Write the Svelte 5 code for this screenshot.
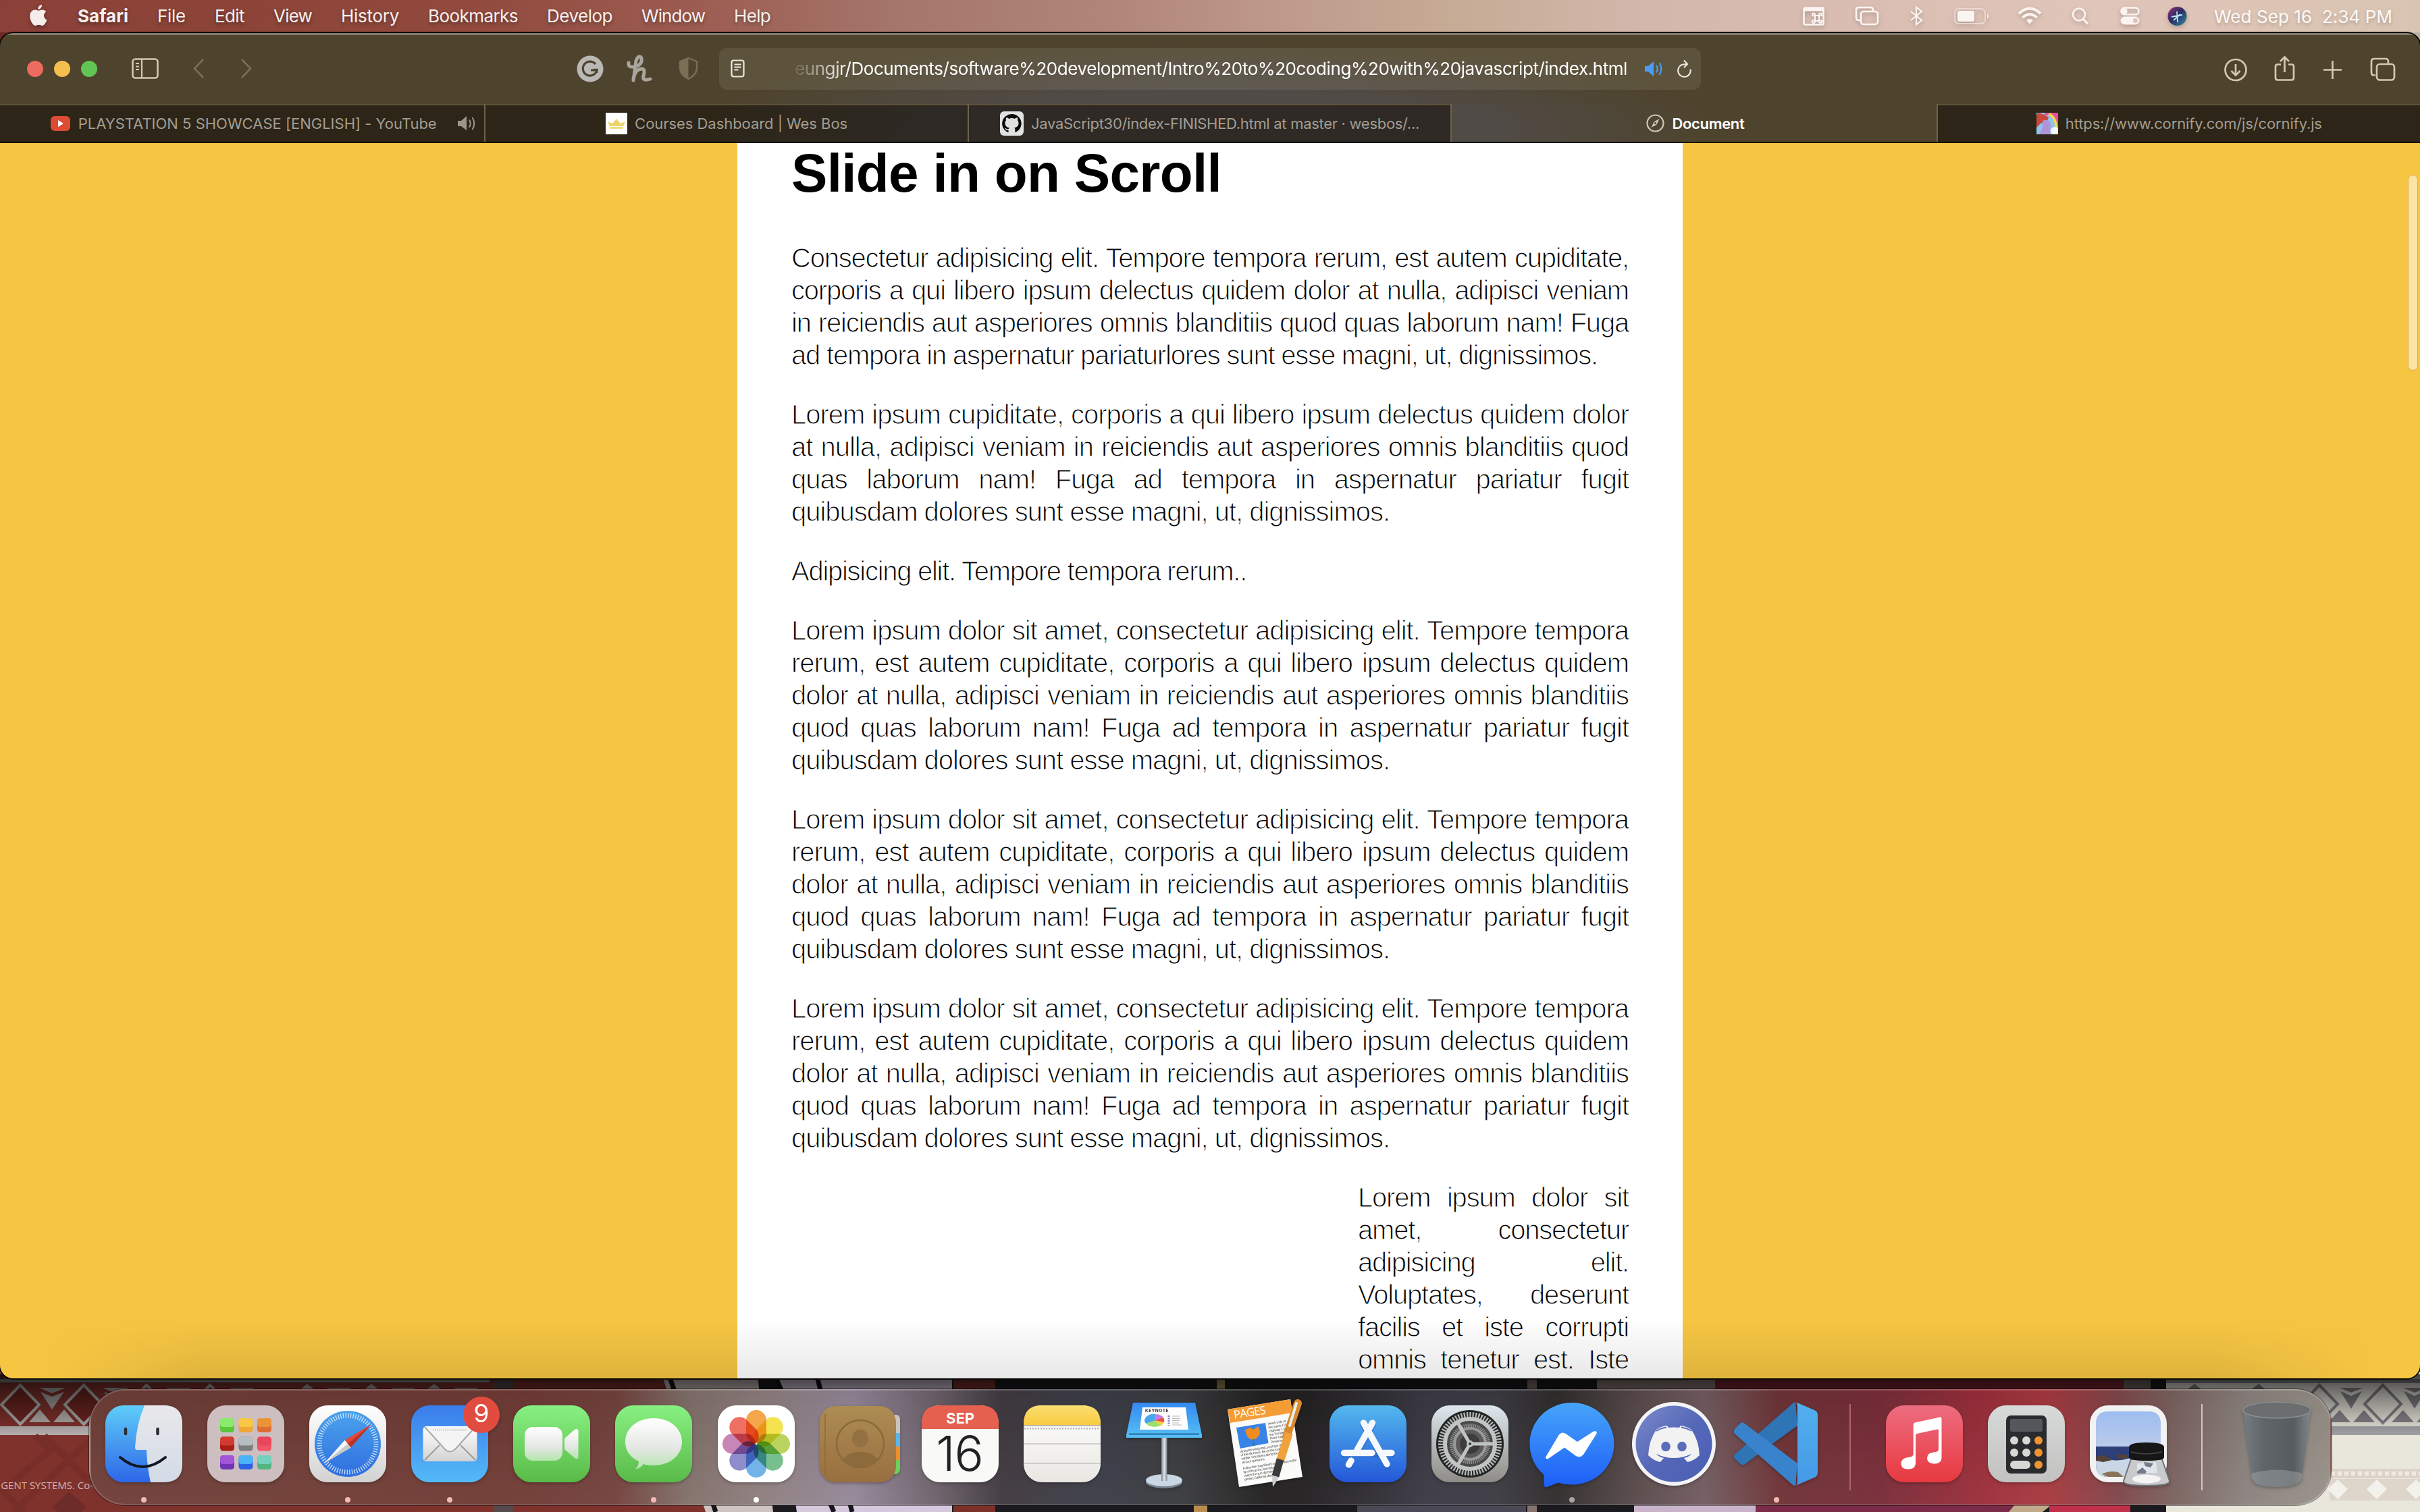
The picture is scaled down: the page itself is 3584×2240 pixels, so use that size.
<script>
  // Spreads the difference between natural and wanted width over the letters.
  function fit(node, width) {
    node.style.letterSpacing = '0px';
    const natural = node.getBoundingClientRect().width;
    const count = [...node.textContent].length;
    node.style.letterSpacing = `${(width - natural) / count}px`;
  }

  // Sizes a whole paragraph by its last, unjustified line.
  function fitParagraph(node, width) {
    const last = node.querySelector('.last .t');
    node.style.letterSpacing = '0px';
    const natural = last.getBoundingClientRect().width;
    node.style.letterSpacing = `${(width - natural) / [...last.textContent].length}px`;
  }

  const menus = [
    ['Safari', 75], ['File', 42], ['Edit', 44], ['View', 57], ['History', 86],
    ['Bookmarks', 133], ['Develop', 97], ['Window', 94], ['Help', 54]
  ];

  const lorem = {
    lines: [
      'Lorem ipsum dolor sit amet, consectetur adipisicing elit. Tempore tempora',
      'rerum, est autem cupiditate, corporis a qui libero ipsum delectus quidem',
      'dolor at nulla, adipisci veniam in reiciendis aut asperiores omnis blanditiis',
      'quod quas laborum nam! Fuga ad tempora in aspernatur pariatur fugit'
    ],
    last: 'quibusdam dolores sunt esse magni, ut, dignissimos.',
    width: 886
  };

  const paragraphs = [
    {
      lines: [
        'Consectetur adipisicing elit. Tempore tempora rerum, est autem cupiditate,',
        'corporis a qui libero ipsum delectus quidem dolor at nulla, adipisci veniam',
        'in reiciendis aut asperiores omnis blanditiis quod quas laborum nam! Fuga'
      ],
      last: 'ad tempora in aspernatur pariaturlores sunt esse magni, ut, dignissimos.',
      width: 1194
    },
    {
      lines: [
        'Lorem ipsum cupiditate, corporis a qui libero ipsum delectus quidem dolor',
        'at nulla, adipisci veniam in reiciendis aut asperiores omnis blanditiis quod',
        'quas laborum nam! Fuga ad tempora in aspernatur pariatur fugit'
      ],
      last: 'quibusdam dolores sunt esse magni, ut, dignissimos.',
      width: 886
    },
    { lines: [], last: 'Adipisicing elit. Tempore tempora rerum..', width: 674 },
    lorem,
    lorem,
    lorem
  ];

  const aside = [
    'Lorem ipsum dolor sit',
    'amet, consectetur',
    'adipisicing elit.',
    'Voluptates, deserunt',
    'facilis et iste corrupti',
    'omnis tenetur est. Iste'
  ];

  const launchpad = [
    ['#9cf57c', '#57c83a'], ['#fbd24e', '#efa733'], ['#efa13a', '#dd6d33'],
    ['#e2463a', '#a81d14'], ['#c9d3d8', '#7b7b7b'], ['#ea3f5b', '#ee5666'],
    ['#b362e6', '#7233b4'], ['#55cdfb', '#2b62e6'], ['#7fdcd0', '#52b57f']
  ];

  const petals = ['#f49d38', '#f3e03c', '#b4d04e', '#69b882', '#62abe8', '#8280c6', '#c279b0', '#ee5f52'];
  const left = [-15, 79, 172, 266];
  const right = [3435, 3529, 3623];
</script>

<div class="screen">
  <svg class="wallpaper" width="3584" height="2240" viewBox="0 0 3584 2240">
    <defs>
      <linearGradient id="shade" x1="0" x2="0" y1="0" y2="1">
        <stop offset="0" stop-color="#000" stop-opacity=".72" /><stop offset=".35" stop-color="#000" stop-opacity=".45" /><stop offset="1" stop-color="#000" stop-opacity="0" />
      </linearGradient>
      <linearGradient id="pc1" x1="0" x2="0" y1="0" y2="1"><stop offset="0" stop-color="#5fcdf9" /><stop offset="1" stop-color="#2d66e8" /></linearGradient>
      <linearGradient id="pc2" x1="0" x2="0" y1="0" y2="1"><stop offset="0" stop-color="#e9e9eb" /><stop offset="1" stop-color="#d2dae6" /></linearGradient>
      <linearGradient id="whitish" x1="0" x2="0" y1="0" y2="1"><stop offset="0" stop-color="#fff" /><stop offset="1" stop-color="#d2d2d2" /></linearGradient>
      <linearGradient id="compass" x1="0" x2="0" y1="0" y2="1"><stop offset="0" stop-color="#4ba3ec" /><stop offset="1" stop-color="#2f6ee0" /></linearGradient>
      <linearGradient id="mail" x1="0" x2="0" y1="0" y2="1"><stop offset="0" stop-color="#3b7ceb" /><stop offset="1" stop-color="#54baf8" /></linearGradient>
      <linearGradient id="green" x1="0" x2="0" y1="0" y2="1"><stop offset="0" stop-color="#88f082" /><stop offset="1" stop-color="#59ba48" /></linearGradient>
      <linearGradient id="glass" x1="0" x2="0" y1="0" y2="1"><stop offset="0" stop-color="#fff" /><stop offset=".6" stop-color="#e3e7e3" /><stop offset="1" stop-color="#b5e5ad" /></linearGradient>
      <linearGradient id="leather" x1="0" x2="0" y1="0" y2="1"><stop offset="0" stop-color="#ad8c53" /><stop offset="1" stop-color="#996f3f" /></linearGradient>
      <linearGradient id="yellow" x1="0" x2="0" y1="0" y2="1"><stop offset="0" stop-color="#fbdf72" /><stop offset="1" stop-color="#f8ca40" /></linearGradient>
      <linearGradient id="paper" x1="0" x2="0" y1="0" y2="1"><stop offset="0" stop-color="#fff" /><stop offset="1" stop-color="#e9e7e2" /></linearGradient>
      <linearGradient id="board" x1="0" x2="0" y1="0" y2="1"><stop offset="0" stop-color="#3489f0" /><stop offset="1" stop-color="#58c0f5" /></linearGradient>
      <linearGradient id="metal" x1="0" x2="1" y1="0" y2="0"><stop offset="0" stop-color="#7f858e" /><stop offset=".5" stop-color="#dfe5ec" /><stop offset="1" stop-color="#81878f" /></linearGradient>
      <linearGradient id="store" x1="0" x2="0" y1="0" y2="1"><stop offset="0" stop-color="#54b8ef" /><stop offset="1" stop-color="#2357d8" /></linearGradient>
      <linearGradient id="prefs" x1="0" x2="0" y1="0" y2="1"><stop offset="0" stop-color="#dde7ed" /><stop offset="1" stop-color="#8f8c87" /></linearGradient>
      <linearGradient id="messenger" x1="0" x2="0" y1="0" y2="1"><stop offset="0" stop-color="#46a5f9" /><stop offset="1" stop-color="#1d5ef8" /></linearGradient>
      <linearGradient id="discord" x1="0" x2="1" y1="0" y2="1"><stop offset="0" stop-color="#7b8bcb" /><stop offset=".5" stop-color="#5567b8" /><stop offset="1" stop-color="#4a5fb4" /></linearGradient>
      <linearGradient id="code" x1="0" x2="0" y1="0" y2="1"><stop offset="0" stop-color="#52b0ee" /><stop offset="1" stop-color="#4598e6" /></linearGradient>
      <linearGradient id="music" x1="0" x2="0" y1="0" y2="1"><stop offset="0" stop-color="#ed6c80" /><stop offset="1" stop-color="#e7393f" /></linearGradient>
      <linearGradient id="calc" x1="0" x2="0" y1="0" y2="1"><stop offset="0" stop-color="#d7dad9" /><stop offset="1" stop-color="#c2c2c0" /></linearGradient>
      <linearGradient id="sky" x1="0" x2="0" y1="0" y2="1"><stop offset="0" stop-color="#9dbdf0" /><stop offset="1" stop-color="#bccbea" /></linearGradient>
      <linearGradient id="bin" x1="0" x2="1" y1="0" y2="0"><stop offset="0" stop-color="#777e83" /><stop offset=".3" stop-color="#5f6569" /><stop offset=".75" stop-color="#575c60" /><stop offset="1" stop-color="#80878b" /></linearGradient>
      <linearGradient id="siri" x1="0" x2="1" y1="0" y2="1"><stop offset="0" stop-color="#a2347c" /><stop offset=".45" stop-color="#2b2a63" /><stop offset="1" stop-color="#2f8f9e" /></linearGradient>
    </defs>
    <rect width="1750" height="60" y="40" fill="#6d2722" />
    <rect width="1834" height="60" x="1750" y="40" fill="#b9b3a6" />
    <rect y="2020" width="3584" height="220" fill="#1b1a1e" />
    <rect y="2020" width="1050" height="220" fill="#7f312b" />
    <rect y="2020" x="730" width="30" height="220" fill="#55494b" />
    <path d="M975 2020H1120L1145 2240H1045Z" fill="#cfc3bf" />
    <path d="M1150 2020H1410V2240H1180Z" fill="#d5c8dc" />
    <path d="M985 2020L1060 2240M1140 2020L1235 2240M1205 2020L1262 2240" stroke="#17141a" stroke-width="7" />
    <rect x="1412" y="2020" width="62" height="220" fill="#7c302a" />
    <rect x="1802" y="2020" width="12" height="40" fill="#a8925a" />
    <rect x="1768" y="2228" width="20" height="12" fill="#b98d4e" />
    <rect x="2010" y="2228" width="250" height="12" fill="#4b4856" />
    <rect x="2262" y="2020" width="14" height="220" fill="#84726e" />
    <rect x="2365" y="2020" width="190" height="60" fill="#8d7b76" />
    <rect x="2420" y="2228" width="190" height="12" fill="#c9b3cb" />
    <rect x="2540" y="2020" width="610" height="60" fill="#7b2530" />
    <rect x="2600" y="2228" width="400" height="12" fill="#7b2b48" />
    <path d="M2985 2228H3040L3025 2240H2975Z" fill="#c2a98a" />
    <rect x="3035" y="2228" width="120" height="12" fill="#c1304a" />
    <rect x="3145" y="2020" width="40" height="60" fill="#6f6660" />
    <rect x="3208" y="2020" width="376" height="220" fill="#e9e6dc" />
    <g>
      <rect y="2043" width="725" height="5" fill="#8a9292" />
      {#each left as x}
        <path d={`M${x + 45} 2052L${x + 73} 2081L${x + 45} 2110L${x + 17} 2081Z`} fill="#6d2520" stroke="#a9aaa7" stroke-width="4" />
        <path d={`M${x + 73} 2056H${x + 112}L${x + 92} 2064Z M${x + 75} 2062L${x + 92} 2069L${x + 110} 2062L${x + 92} 2088Z`} fill="#a3a09f" />
        <path d={`M${x + 58} 2107L${x + 74} 2088L${x + 90} 2107Z M${x + 94} 2107L${x + 110} 2088L${x + 126} 2107Z`} fill="#b0aaa7" />
      {/each}
      {#each [455, 550, 643] as x}
        <path d={`M${x - 10} 2058L${x} 2050L${x + 10} 2058Z M${x + 28} 2056H${x + 66}L${x + 47} 2064Z`} fill="#a3a09f" />
      {/each}
      <rect y="2113" width="134" height="13" fill="#b3aeac" />
      <path d="M52 2127L74 2149L10 2202M66 2127L160 2222M140 2127L20 2240M-5 2200L35 2240" fill="none" stroke="#772e29" stroke-width="9" />
      <path d="M102 2210L128 2232L102 2256L78 2232Z" fill="#6d2c29" />
      <text x="-3" y="2206" class="credit">IGENT SYSTEMS. Co-d</text>
    </g>
    <g>
      <rect x="3208" y="2043" width="376" height="6" fill="#8f9196" />
      {#each right as x}
        <path d={`M${x} 2052L${x + 27} 2080L${x} 2108L${x - 27} 2080Z`} fill="none" stroke="#85858a" stroke-width="4" />
        <path d={`M${x + 30} 2056H${x + 65}L${x + 47} 2063Z M${x + 31} 2061L${x + 47} 2068L${x + 63} 2061L${x + 47} 2087Z M${x + 13} 2107L${x + 30} 2089L${x + 46} 2107Z M${x + 50} 2107L${x + 66} 2089L${x + 82} 2107Z`} fill="#85858a" />
      {/each}
      {#each [3250, 3345] as x}
        <path d={`M${x - 10} 2058L${x} 2050L${x + 10} 2058Z`} fill="#85858a" />
      {/each}
      <rect x="3450" y="2113" width="134" height="13" fill="#a09fa3" />
      <rect x="3450" y="2176" width="134" height="14" fill="#dcd3c8" />
      <path d="M3452 2183H3584" stroke="#efebe2" stroke-width="6" stroke-dasharray="6 4" />
      <rect x="3450" y="2191" width="134" height="32" fill="#ded6ca" />
      {#each [3462, 3520, 3578] as x}
        <path d={`M${x} 2192L${x + 15} 2206L${x} 2221L${x - 15} 2206Z`} fill="#f3f1eb" />
      {/each}
    </g>
    <rect y="2036" width="3584" height="90" fill="url(#shade)" />
  </svg>

  <header class="menubar">
    <svg class="apple" width="26" height="31" viewBox="0 0 26 31" fill="#f5edec">
      <path d="M18 0c.3 2-.6 3.800-1.700 5.100-1.100 1.300-2.600 2-4.100 1.900-.2-1.900.7-3.700 1.700-4.900C15 .9 16.700.1 18 0zM25.500 22.800c-.7 1.700-1.100 2.400-2 3.900-1.200 2-3 4.300-5.100 4.300-1.900 0-2.400-1.200-5-1.200s-3.100 1.200-5 1.200c-2.200 0-3.800-2.100-5-4.100C-.1 21.300-.5 14.700 1.600 11.300c1.500-2.400 3.800-3.800 6-3.800 2.300 0 3.700 1.200 5.600 1.200 1.800 0 2.900-1.200 5.500-1.200 2 0 4.100 1.100 5.600 3-4.900 2.700-4.100 9.700 1.200 12.300z" />
    </svg>
    <nav>
      {#each menus as [label, width], i}
        <span class="slot" style:width="{width}px"><span class="t" class:strong={i === 0} use:fit={width}>{label}</span></span>
      {/each}
    </nav>
    <svg class="status" width="570" height="32" viewBox="2670 8 570 32" fill="none" stroke="#fbf5f2" stroke-width="2.600">
      <rect x="2671.500" y="11.500" width="29" height="25" rx="2" />
      <path d="M2672 14H2700" stroke-width="5" />
      <g stroke-width="2"><rect x="2688" y="23" width="6" height="8" /><circle cx="2686" cy="21.500" r="2" /><circle cx="2696" cy="21.500" r="2" /><circle cx="2686" cy="32" r="2" /><circle cx="2696" cy="32" r="2" /></g>
      <path d="M2755 30h-2q-4 0-4-4V15q0-4 4-4h17q4 0 4 4v1" /><rect x="2756" y="17" width="25" height="19" rx="4" />
      <path d="M2830 17L2846 30L2838 36.500V10.500L2846 17L2830 30" stroke-width="2.200" />
      <rect x="2895" y="13" width="45" height="22" rx="6" stroke="#f4e6e0" stroke-width="2" opacity=".7" />
      <rect x="2899" y="16" width="25" height="16" rx="3" fill="#fbf5f2" stroke="none" />
      <path d="M2943 20v8q5-4 0-8z" fill="#f4e6e0" stroke="none" />
      <path d="M2990 20Q3006 5 3022 20M2995.500 26Q3006 16.500 3016.500 26" stroke-width="4" />
      <path d="M3001 30Q3006 26 3011 30L3006 35.500Z" fill="#fbf5f2" stroke="none" />
      <circle cx="3079" cy="21.500" r="9" /><path d="M3085.500 28.500L3092 35.500" stroke-width="3" />
      <rect x="3141.500" y="11.500" width="26" height="10" rx="5" /><circle cx="3146.500" cy="16.500" r="3" fill="#fbf5f2" />
      <rect x="3141" y="25" width="27" height="11" rx="5.500" fill="#fbf5f2" stroke-width="1" /><circle cx="3162.500" cy="30.500" r="3.500" fill="#dfc3b7" stroke="none" />
      <circle cx="3224.500" cy="24" r="14" fill="url(#siri)" stroke="none" />
      <path d="M3216 25L3232 22M3224 17L3225 33M3219 30L3229 21" stroke="#bfe9f5" stroke-width="1.800" />
    </svg>
    <span class="clock"><span class="t" use:fit={264}>Wed Sep 16&nbsp; 2:34 PM</span></span>
  </header>

  <main class="window">
    <section class="toolbar">
      <div class="lights"><i></i><i></i><i></i></div>
      <svg class="navs" width="180" height="40" viewBox="195 82 180 40" fill="none" stroke="#d3c8ae" stroke-width="2.600">
        <rect x="196.500" y="87.500" width="37" height="28" rx="4" /><path d="M210 88V115M201 94h5M201 98.500h5M201 103h5" stroke-width="2.200" />
        <path d="M301 88L288 101.500L301 115M358 88L371 101.500L358 115" stroke="#7a6e54" />
      </svg>
      <svg class="ext" width="182" height="44" viewBox="853 80 182 44">
        <circle cx="874" cy="102" r="19.500" fill="#b9b8b5" />
        <path d="M882 95a10.500 10.500 0 1 0 2 9H875" fill="none" stroke="#4e432c" stroke-width="3.200" />
        <path d="M884 108v-5h-5" fill="none" stroke="#4e432c" stroke-width="2.500" />
        <path d="M931 93Q930 100 938 99Q952 97 950 86Q946 80 942 90L938 119M938 116Q942 101 951 102Q956 103 953 112Q951 121 963 117" fill="none" stroke="#a9a59d" stroke-width="5" stroke-linecap="round" stroke-linejoin="round" />
        <path d="M1019.500 86L1032 91V102Q1031 111 1019.500 117Q1008 111 1007 102V91Z" fill="none" stroke="#7a6e54" stroke-width="2.400" />
        <path d="M1019.500 86V117Q1008 111 1007 102V91Z" fill="#7a6e54" />
      </svg>
      <div class="address">
        <svg width="22" height="28" viewBox="0 0 22 28" fill="none" stroke="#ece8df" stroke-width="2.200"><rect x="1.500" y="1.500" width="18" height="24" rx="3" /><path d="M5.500 7.500h10M5.500 11.500h10M5.500 15.500h6" stroke-width="1.800" /></svg>
        <span class="url"><span class="t" use:fit={1233}>eungjr/Documents/software%20development/Intro%20to%20coding%20with%20javascript/index.html</span></span>
        <svg class="vol" width="28" height="24" viewBox="0 0 28 24"><path d="M0 8H5L13 1V23L5 16H0Z" fill="#4a9df5" /><path d="M17 6.500Q20.500 12 17 17.500M21.500 3Q27 12 21.500 21" fill="none" stroke="#4a9df5" stroke-width="2.200" /></svg>
        <svg width="22" height="28" viewBox="0 0 22 28" fill="none" stroke="#ece8df" stroke-width="2.100"><path d="M19.500 14.500A9.300 9.300 0 1 1 10.500 7.200H14.500" /><path d="M10 1.500L15 7L10 12" /></svg>
      </div>
      <svg class="actions" width="256" height="42" viewBox="3293 79 256 42" fill="none" stroke="#d3c8ae" stroke-width="2.700">
        <circle cx="3311" cy="101.500" r="15.500" /><path d="M3311 93V109M3304.500 103L3311 109.500L3317.500 103" />
        <path d="M3378 93.500H3373Q3370 93.500 3370 96.500V113Q3370 116.500 3373 116.500H3394Q3397 116.500 3397 113V96.500Q3397 93.500 3394 93.500H3389M3383.500 105V83M3377 89L3383.500 82.500L3390 89" />
        <path d="M3454.500 88V115M3441 101.500H3468" />
        <path d="M3518 109.500H3516Q3512 109.500 3512 105V89.500Q3512 85 3516 85H3533Q3537 85 3537 89.500V92" /><rect x="3520" y="93" width="26" height="23.500" rx="4.500" />
      </svg>
    </section>

    <section class="tabs">
      <div class="tab nudged">
        <svg class="fav" width="30" height="24" viewBox="0 0 30 24"><rect y="1" width="29" height="22" rx="6" fill="#dc4b34" /><path d="M11 7L19 12L11 17Z" fill="#fff" /></svg>
        <span class="t" use:fit={531}>PLAYSTATION 5 SHOWCASE [ENGLISH] - YouTube</span>
        <svg class="sound" width="30" height="24" viewBox="0 0 30 24"><path d="M0 8H5L13 1V22L5 16H0Z" fill="#9b968c" /><path d="M17 6.500Q20.500 12 17 17.500M21.500 3Q27 12 21.500 21" fill="none" stroke="#9b968c" stroke-width="2" /></svg>
      </div>
      <div class="tab">
        <svg class="fav" width="32" height="32" viewBox="0 0 32 32"><rect width="32" height="32" fill="#fff" /><path d="M6 20L3 13L10 16L16 9L22 16L29 13L26 20Z" fill="#ecd469" /><path d="M6 22.500H26" stroke="#ecd469" stroke-width="2.500" /></svg>
        <span class="t" use:fit={315}>Courses Dashboard | Wes Bos</span>
      </div>
      <div class="tab">
        <svg class="fav" width="35" height="36" viewBox="0 0 35 36"><rect width="35" height="36" rx="6" fill="#e2e2e1" /><path d="M17.500 4a14 14 0 0 0-5 27.200V28c-4 .7-4-2.500-6-3 2-.7 3 1.600 4.500 1.600l1.800-.5c.3-1 .8-1.500 1.200-1.900-4.500-.7-6.500-3-6.500-7 0-2 .7-3.200 1.500-4-.4-1.200-.2-2.800.2-3.900 1.800 0 3 1 3.900 1.600a13 13 0 0 1 8.800 0c.9-.6 2.100-1.600 3.900-1.600.4 1.100.6 2.700.2 3.900.8.800 1.500 2 1.500 4 0 4-2 6.300-6.500 7 .8.700 1.300 1.600 1.300 3v4A14 14 0 0 0 17.500 4z" fill="#0b0b0b" /></svg>
        <span class="t" use:fit={575}>JavaScript30/index-FINISHED.html at master · wesbos/...</span>
      </div>
      <div class="tab active nudged">
        <svg class="fav" width="27" height="27" viewBox="0 0 27 27" fill="none" stroke="#d0c8ba" stroke-width="2.200"><circle cx="13.500" cy="13.500" r="12" /><path d="M19.500 7L15.500 15.500L7.500 20L11.500 11.500Z" fill="#d0c8ba" stroke="none" /><circle cx="13.500" cy="13.500" r="1.500" fill="#4e432c" stroke="none" /></svg>
        <span class="t" use:fit={107}>Document</span>
      </div>
      <div class="tab nudged">
        <svg class="fav" width="32" height="32" viewBox="0 0 32 32"><rect width="32" height="32" fill="#8fc4ee" /><path d="M12 0H32V22Q28 2 12 4Z" fill="#e84fa0" /><path d="M18 2Q30 6 29 26" stroke="#f6d84a" stroke-width="3.500" fill="none" /><path d="M2 0Q12 2 18 7L16 12L6 16L0 22V4Z" fill="#c8483c" /><path d="M9 12Q18 8 21 16L20 32H4Q10 24 9 12Z" fill="#b293d8" /><circle cx="27" cy="27" r="6" fill="#f4f7fc" /></svg>
        <span class="t" use:fit={380}>https://www.cornify.com/js/cornify.js</span>
      </div>
    </section>

    <section class="page">
      <article>
        <h1><span class="t" use:fit={637}>Slide in on Scroll</span></h1>
        {#each paragraphs as p}
          <p use:fitParagraph={p.width}>
            {#each p.lines as line}<span class="line">{line}</span>{/each}
            <span class="last"><span class="t">{p.last}</span></span>
          </p>
        {/each}
        <p class="aside">
          {#each aside as line}<span class="line">{line}</span>{/each}
        </p>
      </article>
      <div class="fade"></div>
      <div class="scrollbar"></div>
    </section>
  </main>

  <footer class="dock">
    <div class="app run">
      <svg viewBox="0 0 114 114"><rect width="114" height="114" rx="27" fill="url(#pc1)" /><path d="M58 0H87Q114 0 114 27V87Q114 114 87 114H67Q62 92 61 66H47Q44 66 44 62Q46 28 58 0Z" fill="url(#pc2)" /><path d="M30 35V42M77.500 35V42" stroke="#2a2d33" stroke-width="4.500" stroke-linecap="round" /><path d="M22 77Q55 105 89 77" fill="none" stroke="#121820" stroke-width="4" stroke-linecap="round" /></svg>
    </div>
    <div class="app">
      <svg viewBox="0 0 114 114"><rect width="114" height="114" rx="27" fill="#cdbfc0" />
        {#each launchpad as [a, b], i}
          <rect x={19 + (i % 3) * 27.5} y={19 + Math.floor(i / 3) * 27.5} width="21" height="21" rx="4.500" fill={b} />
          <rect x={19 + (i % 3) * 27.5} y={19 + Math.floor(i / 3) * 27.5} width="21" height="13" rx="4.500" fill={a} opacity=".75" />
        {/each}
      </svg>
    </div>
    <div class="app run">
      <svg viewBox="0 0 114 114"><rect width="114" height="114" rx="27" fill="url(#whitish)" /><circle cx="57" cy="57" r="49" fill="url(#compass)" /><circle cx="57" cy="57" r="42" fill="none" stroke="#dcebfa" stroke-width="7" stroke-dasharray="1.200 2.465" /><path d="M92 28L52.600 51.600L61.400 62.400Z" fill="#e0493c" /><path d="M92 28L57 57L61.400 62.400Z" fill="#b93328" /><path d="M22 86L52.600 51.600L61.400 62.400Z" fill="#f6f6f6" /><path d="M22 86L57 57L61.400 62.400Z" fill="#c9c9c9" /></svg>
    </div>
    <div class="app run">
      <svg viewBox="0 0 114 114"><rect width="114" height="114" rx="27" fill="url(#mail)" /><rect x="17.500" y="31" width="80" height="52" rx="5" fill="url(#whitish)" /><path d="M20 81L42 59M95 81L73 59" stroke="#9a9a9a" stroke-width="1.800" /><path d="M20 32L49 64Q57 73 66 64L95 32" fill="#f4f4f4" stroke="#a9a9a9" stroke-width="2" /><path d="M32 36.500H82" stroke="#bbb" stroke-width="1.500" stroke-dasharray="2 1" /><circle cx="104" cy="14" r="27" fill="#e24c40" /><text x="104" y="25" class="badge">9</text></svg>
    </div>
    <div class="app">
      <svg viewBox="0 0 114 114"><rect width="114" height="114" rx="27" fill="url(#green)" /><rect x="17" y="32" width="56" height="50" rx="12" fill="url(#glass)" /><path d="M76 49L91 36Q96.500 33 96.500 39V76Q96.500 81 91 78L76 65Z" fill="url(#glass)" /></svg>
    </div>
    <div class="app run">
      <svg viewBox="0 0 114 114"><rect width="114" height="114" rx="27" fill="url(#green)" /><path d="M57 19C81 19 99 34 99 54S81 89 57 89Q48 89 42 87Q38 93 30 94.500Q35 90 35 83C22 77 15 67 15 54C15 34 33 19 57 19Z" fill="url(#glass)" /></svg>
    </div>
    <div class="app run bright">
      <svg viewBox="0 0 114 114"><rect width="114" height="114" rx="27" fill="#fff" />
        {#each petals as color, i}
          <rect class="petal" x="42" y="7" width="30" height="49" rx="15" fill={color} transform={`rotate(${i * 45} 57 57)`} />
        {/each}
      </svg>
    </div>
    <div class="app">
      <svg viewBox="0 0 114 114"><path d="M100 14H113Q119 14 119 22V42H100Z" fill="#c9c5bd" /><rect x="100" y="41" width="19" height="21" fill="#5bb4ea" /><rect x="100" y="61" width="19" height="21" fill="#ec8f2f" /><path d="M100 81H119V94Q119 100 113 102H100Z" fill="#6fcf5c" /><rect y="1" width="113" height="113" rx="24" fill="url(#leather)" /><path d="M8 12V102" stroke="#8d6b3a" stroke-width="1.500" /><circle cx="60" cy="57" r="35" fill="none" stroke="#8a6a3b" stroke-width="2.500" /><ellipse cx="60" cy="49" rx="12" ry="13.500" fill="#937142" /><path d="M35 80Q42 69 60 69T85 80Q75 92 60 92T35 80Z" fill="#8d6a3c" /></svg>
    </div>
    <div class="app">
      <svg viewBox="0 0 114 114"><rect width="114" height="114" rx="27" fill="#f9f9f8" /><path d="M0 35V27Q0 0 27 0H87Q114 0 114 27V35Z" fill="#e5604f" /><text x="57" y="27" class="month">SEP</text><text x="56" y="97" class="day">16</text></svg>
    </div>
    <div class="app">
      <svg viewBox="0 0 114 114"><rect width="114" height="114" rx="27" fill="url(#paper)" /><path d="M0 29V27Q0 0 27 0H87Q114 0 114 27V29Z" fill="url(#yellow)" /><path d="M0 30H114" stroke="#a8a294" stroke-width="1.500" /><path d="M1 34.500H113" stroke="#a9a7a2" stroke-width="2" stroke-dasharray="2 2" /><path d="M0 57H114M0 86H114" stroke="#cfcdc9" stroke-width="1.800" /></svg>
    </div>
    <div class="app">
      <svg viewBox="0 0 114 114"><ellipse cx="57" cy="114" rx="27" ry="9" fill="#76828f" /><ellipse cx="57" cy="111" rx="27" ry="9" fill="#c9d7e4" /><rect x="53" y="46" width="8.500" height="66" fill="url(#metal)" /><path d="M11 -4H103L113 44V48H1V44Z" fill="url(#board)" /><path d="M5 42.500H109" stroke="#1c6c9e" stroke-width="2" /><path d="M25 3H89L93 36H21Z" fill="#fdfdfd" /><text x="29" y="9.500" class="keynote">KEYNOTE</text><ellipse cx="43" cy="22.500" rx="14" ry="9.500" fill="#9adf6c" /><path d="M43 22.500L45 13A14 9.500 0 0 0 30 27Z" fill="#4aa5f0" /><path d="M43 22.500L46 13Q53 14 56 18Z" fill="#c979ee" /><path d="M43 22.500L56 18Q58 22 57 25Z" fill="#ec4f4c" /><path d="M43 22.500L57 25Q56 28 52 30Z" fill="#f7cf45" /><path d="M64 15V30" stroke="#7d7fd2" stroke-width="3" stroke-dasharray="2 1.500" /><path d="M69 16H80M69 19.500H81M69 22.500H80M69 26H79M69 29H83" stroke="#b9b9b9" /></svg>
    </div>
    <div class="app">
      <svg viewBox="0 0 114 114"><path d="M0 6L93 -9L111 106L17 121Z" fill="#fbfbfa" /><path d="M0 6L93 -9L96 11L4 26Z" fill="#f49d35" /><g transform="rotate(-9 10 20)"><text x="10" y="20" class="pages">PAGES</text></g><path d="M13 33L56 26L60.500 56L18.500 64Z" fill="#3a83e6" /><path d="M26 36L34 33L38 36L45 31L48 38Q48 48 38 51Q28 50 26 36Z" fill="#f08c22" /><path d="M38 50L39 60" stroke="#47822f" stroke-width="1.500" />
        <g transform="rotate(-9 60 30)" class="tiny"><text x="60" y="29">Head north on</text><text x="60" y="34.500">the scenic CA</text><text x="60" y="40">Highway 1 to</text><text x="60" y="45.500">the Tomales</text><text x="60" y="51">Point Tule Elk</text><text x="60" y="56.500">Preserve trail</text></g>
        <g transform="rotate(-9 19 70)" class="tiny"><text x="19" y="70">along the windy trail, you’ll get close</text><text x="19" y="75.500">of the elk herds. Be on the look out</text><text x="19" y="81">wildlife. Volunteers along the way</text><text x="19" y="86.500">all your questions.</text><text x="19" y="95.500">Follow the magnificent ocean views to the</text><text x="19" y="101">tip of the point, and enjoy the</text><text x="19" y="106.500">watch the sun dip beyond</text><text x="19" y="112">perfect California day.</text></g>
        <path d="M104 -3L87 47" stroke="#d98a2c" stroke-width="12" stroke-linecap="round" /><path d="M102 -3L92 30" stroke="#e8edf2" stroke-width="4" stroke-linecap="round" /><path d="M91 41L78 82" stroke="#f0a13c" stroke-width="12" /><path d="M78 80L71 105" stroke="#3a3a3c" stroke-width="11" /><path d="M66 104L76 107L67 121Z" fill="#c9cfd6" /></svg>
    </div>
    <div class="app">
      <svg viewBox="0 0 114 114"><rect width="114" height="114" rx="27" fill="url(#store)" /><g stroke="#1b4fb4" stroke-opacity=".35" stroke-width="10" stroke-linecap="round" transform="translate(0 2)"><path d="M64 26L41 68M50 26L86 88M22 70H92M32 82L28.500 88" /></g><g stroke="#f5f8fc" stroke-width="9.500" stroke-linecap="round"><path d="M21.500 70.500H63M80 70.500H92M32 82L28.500 88M50.500 26L85 87M63.500 26L41 66" /></g></svg>
    </div>
    <div class="app">
      <svg viewBox="0 0 114 114"><rect width="114" height="114" rx="27" fill="url(#prefs)" /><circle cx="57" cy="57" r="50" fill="#232323" /><circle cx="57" cy="57" r="43" fill="none" stroke="#b4b8b9" stroke-width="8" stroke-dasharray="2.300 1.990" /><circle cx="57" cy="57" r="37" fill="#4a4947" stroke="#c0c4c5" stroke-width="6" /><circle cx="57" cy="57" r="27" fill="none" stroke="#8f908f" stroke-width="6" stroke-dasharray="1.500 1.300" /><circle cx="57" cy="57" r="23" fill="#5b5a58" stroke="#97999a" stroke-width="4" /><circle cx="57" cy="57" r="15" fill="#3d3c3b" /><path d="M57 57H94M57 57L38.500 25M57 57L38.500 89" stroke="#c0c4c5" stroke-width="5" /><circle cx="57" cy="57" r="5" fill="#c0c4c5" /><circle cx="57" cy="57" r="2" fill="#333" /></svg>
    </div>
    <div class="app run dim">
      <svg viewBox="0 0 114 114"><path d="M57 -4C92 -4 119.500 23 119.500 57S92 117.500 57 117.500Q46 117.500 37 114.500L20 121Q15.500 122 15.500 117V103Q-5.500 84 -5.500 57C-5.500 23 22 -4 57 -4Z" fill="url(#messenger)" /><path d="M18.500 76L37.500 44Q42 38 48 42L65 54L89 38.500Q95 37 93.500 42L74 73Q69 78.500 63 75L46 62.500L22 79Q17 80 18.500 76Z" fill="#fff" /></svg>
    </div>
    <div class="app">
      <svg viewBox="0 0 114 114"><circle cx="57" cy="57" r="62" fill="#f4f4f6" /><circle cx="57" cy="57" r="56.500" fill="url(#discord)" /><path d="M31 36Q38 31 47 30L49 33Q57 32 65 33L67 30Q76 31 83 36Q94 52 95 74Q87 82 77 84L72 78Q80 76 83 72Q57 84 31 72Q34 76 42 78L37 84Q27 82 19 74Q20 52 31 36Z" fill="#f2f2f3" /><path d="M31 38Q37 34 46 32.500M83 38Q77 34 68 32.500" stroke="#5b6cba" stroke-width="2" fill="none" /><ellipse cx="45" cy="61" rx="6.800" ry="7.300" fill="#5b6cba" /><ellipse cx="69" cy="61" rx="6.800" ry="7.300" fill="#5b6cba" /></svg>
    </div>
    <div class="app run">
      <svg viewBox="0 0 114 114"><path d="M85 -5L88 30L10 87Q7 90 4 87L-5 79Q-7 76 -5 73L81 -3Z" fill="#2f74b4" /><path d="M4 26Q7 24 10 27L88 86L85 119Q82 119 80 117L-5 42Q-7 39 -5 35Z" fill="#3883cc" /><path d="M85 -5L113 7Q118 9 118 14V100Q118 105 113 107L85 119Q88 118 88 112V2Q88 -4 85 -5Z" fill="url(#code)" /></svg>
    </div>
    <div class="divider"></div>
    <div class="app">
      <svg viewBox="0 0 114 114"><rect width="114" height="114" rx="27" fill="url(#music)" /><path d="M40.700 28Q41 26 43 25.500L80 17.500Q82.500 17 82.500 20V78Q82 86.500 72 86.500Q61 86.500 61 78Q61 70 71 69.500Q78 69 78 65V37Q78 35 76 35.500L46 42Q44 42.500 44 44V85Q44 94.500 33 94.500Q22.500 94.500 22.500 86.500Q22.500 78 33 77Q40.500 76.500 40.700 72Z" fill="#fff" /></svg>
    </div>
    <div class="app">
      <svg viewBox="0 0 114 114"><rect width="114" height="114" rx="27" fill="url(#calc)" /><rect x="27" y="15" width="60" height="86" rx="7" fill="#292b2e" /><rect x="33" y="20" width="48" height="19" rx="3" fill="#54585c" />
        {#each [52, 70, 88] as y}
          {#if y < 88}<circle cx="39" cy={y} r="6" fill="#d7d7d5" /><circle cx="57" cy={y} r="6" fill="#d7d7d5" />{:else}<rect x="33" y="82" width="30" height="12" rx="6" fill="#d7d7d5" />{/if}
          <circle cx="75" cy={y} r="6" fill="#ee9431" />
        {/each}
      </svg>
    </div>
    <div class="app">
      <svg viewBox="0 0 114 114"><rect width="114" height="114" rx="27" fill="#f2f2f2" /><path d="M9 61V27Q9 9 27 9H87Q105 9 105 27V61Z" fill="url(#sky)" /><path d="M9 61H105V87Q105 106 87 106H27Q9 106 9 87Z" fill="#2c3f78" /><path d="M9 82Q20 76 30 80T60 78V106H27Q9 106 9 87Z" fill="#c9d6e6" /><path d="M9 76Q18 72 26 76L33 81L20 84L9 82ZM38 74L52 72L58 78L44 80Z" fill="#54423a" /><path d="M18 102Q28 96 42 99L50 106H27Z" fill="#8b7358" /><path d="M61 80H107L118 112Q119 119 84 119Q49 119 50 112Z" fill="#c8cace" stroke="#6f7276" stroke-width="2" /><ellipse cx="84" cy="109" rx="21" ry="6.500" fill="#f4f4f4" /><path d="M70 86L98 84L100 100H70Z" fill="#dfe5ea" /><path d="M80 84L94 86L90 92L82 90ZM70 98L78 92L84 98L82 101H70Z" fill="#74798a" /><path d="M58 62Q58 55 84 55T110 62V77Q110 82 84 82T58 77Z" fill="#161617" /><path d="M61 69Q84 75 107 69" stroke="#3d3d3f" fill="none" stroke-width="2" /></svg>
    </div>
    <div class="divider pale"></div>
    <div class="app">
      <svg viewBox="0 0 114 114"><path d="M8 7L21 108Q23 121 58 121T95 108L108 7Z" fill="url(#bin)" /><path d="M20 101Q58 90 96 101L95 108Q92 121 58 121T21 108Z" fill="#a4a9ab" opacity=".45" /><ellipse cx="58" cy="7" rx="50" ry="12" fill="#6b6d6e" stroke="#8a9093" stroke-width="1.500" /></svg>
    </div>
  </footer>
</div>

<style>
  :global(body) { margin: 0; overflow: hidden; }
  .screen {
    position: relative; width: 3584px; height: 2240px; overflow: hidden; display: flex; flex-direction: column;
    font-family: Inter, "Liberation Sans", sans-serif;
  }
  .wallpaper { position: absolute; inset: 0; display: block; }
  .t { display: inline-block; white-space: nowrap; }
  .credit { font: 15px "Open Sans", sans-serif; fill: #d3b7b3; }

  .menubar {
    position: relative; height: 48px; flex: none; display: flex; align-items: center; box-sizing: border-box;
    margin-bottom: 1px; padding-right: 41px; color: #f7efed; font-size: 26px;
    background: linear-gradient(90deg, #8b4138 0, #8c4438 350px, #924a3e 700px, #9c5b50 1020px, #a5766b 1330px, #b18679 1650px, #bf9a8c 1900px, #c6ab95 2150px, #d4b7ac 2450px, #e0c5b9 3100px, #d9c4b2 3584px);
  }
  .apple { margin-left: 44px; margin-top: -4px; filter: drop-shadow(0 3px 3px rgba(0, 0, 0, .3)); }
  nav { display: flex; gap: 43px; margin-left: 45px; }
  .slot { display: block; line-height: 48px; }
  nav, .clock { text-shadow: 0 3px 5px rgba(0, 0, 0, .35); }
  .clock { line-height: 47px; width: 264px; margin-left: 39px; color: #fdf9f7; text-shadow: 0 3px 5px rgba(0, 0, 0, .2); }
  .status { margin-left: auto; filter: drop-shadow(0 3px 3px rgba(0, 0, 0, .2)); }
  .strong { font-weight: 700; }

  .window {
    position: relative; height: 1993px; flex: none; box-sizing: border-box; overflow: hidden; display: flex; flex-direction: column;
    border-radius: 20px; background: #4e432c; box-shadow: 0 0 0 2px #0b0a08;
  }
  .toolbar {
    height: 105px; flex: none; display: flex; align-items: center; box-sizing: border-box; border-top: 3px solid #857c69; padding-bottom: 3px;
    background: radial-gradient(ellipse 780px 130px at 1790px 140px, #504b48 0, #504b46 45%, rgba(78, 67, 44, 0) 100%);
  }
  .lights { display: flex; gap: 16px; margin-left: 40px; }
  .lights i { width: 24px; height: 24px; border-radius: 50%; background: #ed6a5e; }
  .lights i:nth-child(2) { background: #f5bf4f; }
  .lights i:nth-child(3) { background: #61c554; }
  .navs { margin-left: 51px; }
  .ext { margin-left: 478px; }
  .address {
    display: flex; align-items: center; width: 1454px; height: 62px; margin-left: 30px; box-sizing: border-box; padding-left: 17px;
    border-radius: 12px; background: rgba(255, 250, 235, .085); color: #fff; font-size: 26px;
  }
  .url { width: 1240px; margin-left: 73px; line-height: 62px; mask-image: linear-gradient(90deg, rgba(0, 0, 0, .1), #000 80px); }
  .vol { margin: 0 20px 0 19px; }
  .actions { margin-left: auto; margin-right: 35px; }

  .tabs { height: 56px; flex: none; display: flex; border-bottom: 2px solid #050504; background: radial-gradient(ellipse 760px 160px at 1790px 40px, #524d49 0, #504b46 55%, rgba(78, 67, 44, 0) 100%); }
  .tab {
    flex: 1; display: grid; grid-template-columns: 1fr auto auto 1fr; align-items: center; box-sizing: border-box; padding-top: 1px;
    border-right: 2px solid #6d6349; box-shadow: inset 0 2px #5d5239; background: rgba(8, 5, 0, .47); color: #a39d92; font-size: 22px;
  }
  .nudged { padding-left: 4px; }
  .tab:last-child { border-right: 0; padding-left: 1px; }
  .tab .t { padding-top: 1px; }
  .tab .fav { grid-column: 2; margin-right: 11px; }
  .tab .sound { justify-self: end; margin-right: 9px; }
  .tab.active { background: none; box-shadow: none; color: #fff; font-weight: 600; }

  .page { position: relative; flex: 1; background: #f6c643; overflow: hidden; }
  article {
    width: 1240px; height: 100%; margin: 0 auto; padding: 0 80px; background: #fff; color: #000;
    font: 40px/48px "Liberation Sans", Arial, sans-serif;
  }
  h1 { margin: 0 0 56px; font-size: 80px; line-height: 90px; }
  p { margin: 0 0 40px; -webkit-text-stroke: 1.100px #fff; }
  .line { display: block; text-align: justify; text-align-last: justify; }
  .last { display: block; white-space: nowrap; }
  .last .t { vertical-align: top; }
  .aside { width: 401px; margin-left: auto; letter-spacing: -1.200px; }
  .fade {
    position: absolute; left: 0; right: 0; bottom: 0; height: 90px;
    background: linear-gradient(rgba(0, 0, 0, 0), rgba(0, 0, 0, .09)); mask-image: linear-gradient(90deg, transparent 60px, #000 300px, #000 3280px, transparent 3520px);
  }
  .scrollbar { position: absolute; right: 3px; top: 47px; width: 13px; height: 288px; border-radius: 8px; background: #fbe4a6; border: 1px solid #dcb04a; }

  .dock {
    position: relative; display: flex; align-items: center; gap: 37.100px; width: 3321px; height: 172px; margin: 16px 0 0 132px; box-sizing: border-box;
    padding-left: 22px; border: 2px solid rgba(255, 255, 255, .17); border-radius: 54px; box-shadow: 0 0 0 1px rgba(0, 0, 0, .45);
    background:
      linear-gradient(rgba(0, 0, 0, .08), rgba(255, 255, 255, .03)),
      linear-gradient(90deg, #704039 0, #713c36 640px, #74433e 780px, #82706a 880px, #8f8080 1000px, #95889a 1130px, #6e636c 1250px, #413a40 1350px, #3b3e48 1500px, #3a3b3d 1620px, #232122 1740px, #232122 1800px, #3c3a44 1980px, #3d3c44 2080px, #302d2d 2170px, #5a4b4b 2290px, #735d62 2390px, #6f3437 2500px, #792d39 2650px, #9c2f3b 2800px, #a83a40 2900px, #814649 3000px, #7b625f 3080px, #8b837e 3190px, #9a928a 3320px);
  }
  .app { position: relative; width: 114px; height: 114px; flex: none; margin-bottom: 10px; }
  .app svg { display: block; width: 114px; height: 114px; overflow: visible; filter: drop-shadow(0 2px 2px rgba(0, 0, 0, .25)); }
  .run::after { content: ""; position: absolute; left: 53px; top: 136px; width: 8px; height: 8px; border-radius: 50%; background: #f3b9b5; }
  .bright::after { background: #fff; }
  .dim::after { background: #a9a5a6; }
  .divider { width: 2px; height: 128px; margin: 0 14.500px; background: #b0626c; }
  .pale { background: #d3c5c3; }
  .petal { mix-blend-mode: multiply; opacity: .9; }
  .badge { font: 37px Inter, sans-serif; fill: #fff; text-anchor: middle; }
  .month { font: 700 22px Inter, sans-serif; fill: #fff; text-anchor: middle; }
  .day { font: 300 72px Inter, sans-serif; fill: #222; text-anchor: middle; letter-spacing: -1px; }
  .keynote { font: 700 6.500px Inter, sans-serif; fill: #333; letter-spacing: .5px; }
  .pages { font: 17px "Open Sans", sans-serif; fill: #fff; letter-spacing: -1px; }
  .tiny { font: 5px "Liberation Sans", sans-serif; fill: #555; letter-spacing: -.3px; }
</style>
